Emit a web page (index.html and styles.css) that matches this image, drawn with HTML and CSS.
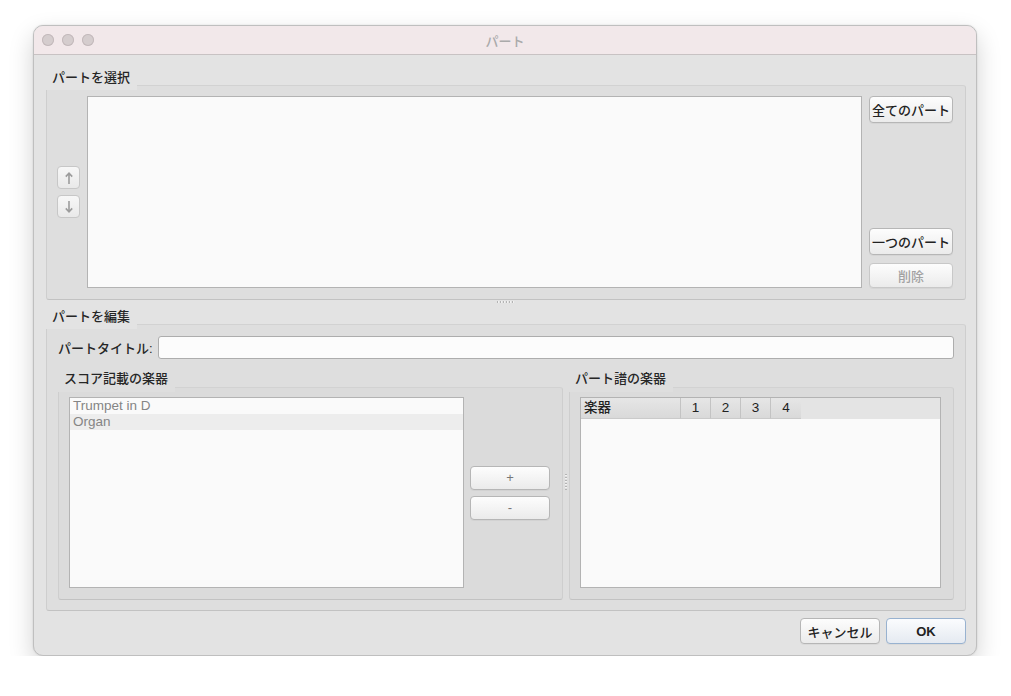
FILE: index.html
```html
<!DOCTYPE html>
<html lang="ja">

<head>
  <meta charset="UTF-8">
  <meta name="viewport" content="width=device-width, initial-scale=1.0">
  <title>パート</title>
  <link rel="stylesheet" href="styles.css">
</head>

<body>
  <div class="window">
    <div class="titlebar">
      <div class="lights"><i></i><i></i><i></i></div>
      <span class="title">パート</span>
    </div>

    <div class="content">
      <div class="group-title">パートを選択</div>
      <div class="frame select">
        <div class="arrows">
          <button class="tool">
            <svg width="10" height="14" viewBox="0 0 10 14"><path d="M5 13V2.5M1.8 5.6L5 2.2l3.2 3.4" stroke="#9c9c9c" stroke-width="1.6" fill="none"/></svg>
          </button>
          <button class="tool">
            <svg width="10" height="14" viewBox="0 0 10 14"><path d="M5 1v10.5M1.8 8.4L5 11.8l3.2-3.4" stroke="#9c9c9c" stroke-width="1.6" fill="none"/></svg>
          </button>
        </div>
        <div class="listbox"></div>
        <div class="side">
          <button class="btn">全てのパート</button>
          <button class="btn push">一つのパート</button>
          <button class="btn small" disabled>削除</button>
        </div>
      </div>

      <div class="splitter-h"><span></span></div>

      <div class="group-title">パートを編集</div>
      <div class="frame edit">
        <div class="title-row">
          <label for="pt">パートタイトル:</label>
          <input id="pt" class="field" type="text">
        </div>
        <div class="panes">
          <div class="pane score">
            <div class="group-title">スコア記載の楽器</div>
            <div class="frame inner">
              <ul class="listbox instruments">
                <li>Trumpet in D</li>
                <li>Organ</li>
              </ul>
              <div class="mid">
                <button class="btn light">+</button>
                <button class="btn light">-</button>
              </div>
            </div>
          </div>
          <div class="splitter-v"><span></span></div>
          <div class="pane parts">
            <div class="group-title">パート譜の楽器</div>
            <div class="frame inner">
              <div class="listbox table">
                <div class="thead">
                  <span class="th name">楽器</span>
                  <span class="th num">1</span>
                  <span class="th num">2</span>
                  <span class="th num">3</span>
                  <span class="th num">4</span>
                </div>
              </div>
            </div>
          </div>
        </div>
      </div>

      <div class="actions">
        <button class="btn wide">キャンセル</button>
        <button class="btn wide default">OK</button>
      </div>
    </div>
  </div>
</body>

</html>
```

FILE: styles.css
```css
body {
  margin: 0;
  background: #fff;
  font-family: "Liberation Sans", "Noto Sans CJK JP", sans-serif;
  font-size: 13px;
  color: #222;
}

.window {
  margin: 25px 0 0 33px;
  width: 944px;
  height: 631px;
  box-sizing: border-box;
  border: 1px solid #bfbfbf;
  border-radius: 10px;
  overflow: hidden;
  background: #e3e3e3;
  box-shadow: 0 10px 24px rgba(0, 0, 0, 0.18), 0 0 2px rgba(0, 0, 0, 0.12);
  display: flex;
  flex-direction: column;
}

.titlebar {
  height: 28px;
  flex: none;
  background: #f2e8ea;
  border-bottom: 1px solid #c8c2c3;
  display: grid;
  grid-template-columns: 1fr auto 1fr;
  align-items: center;
}

.lights {
  display: flex;
  gap: 8px;
  padding-left: 8px;
}

.lights i {
  width: 12px;
  height: 12px;
  border-radius: 50%;
  background: #d5cdce;
  box-shadow: inset 0 0 0 1px #c3b9bb;
}

.title {
  color: #aaa;
  font-weight: 500;
}

.content {
  flex: 1;
  display: flex;
  flex-direction: column;
  padding: 9px 10px 0 12px;
}

/* group box: title tab sits over the frame corner */
.group-title {
  align-self: flex-start;
  height: 26px;
  box-sizing: border-box;
  padding: 6px 7px 0 6px;
  margin-bottom: -5px;
  line-height: 16px;
  background: #e3e3e3;
  font-weight: 500;
  color: #262626;
  position: relative;
  z-index: 1;
}

.frame {
  box-sizing: border-box;
  border: 1px solid;
  border-color: #d2d2d2 #cecece #c2c2c2;
  border-radius: 3px;
  background: #dedede;
}

.listbox {
  box-sizing: border-box;
  background: #fafafa;
  border: 1px solid #b3b3b3;
}

.btn {
  box-sizing: border-box;
  height: 27px;
  padding: 0;
  border: 1px solid #b6b6b6;
  border-radius: 4px;
  background: linear-gradient(#fdfdfd, #ebebeb);
  box-shadow: 0 1px 0 rgba(0, 0, 0, 0.04);
  font: inherit;
  font-weight: 500;
  color: #222;
}

.btn:disabled {
  color: #a2a2a2;
  border-color: #c8c8c8;
}

/* パートを選択 */
.select {
  height: 215px;
  display: flex;
  gap: 7px;
  padding: 10px 12px 11px 10px;
}

.select .listbox {
  flex: 1;
}

.arrows {
  width: 23px;
  display: flex;
  flex-direction: column;
  justify-content: center;
  gap: 6px;
}

.tool {
  width: 23px;
  height: 23px;
  padding: 0;
  border: 1px solid #c7c7c7;
  border-radius: 4px;
  background: linear-gradient(#f7f7f7, #e9e9e9);
  display: flex;
  align-items: center;
  justify-content: center;
}

.side {
  width: 84px;
  display: flex;
  flex-direction: column;
  gap: 8px;
}

.side .push {
  margin-top: auto;
}

.side .small {
  height: 25px;
}

.splitter-h {
  height: 3px;
  display: flex;
  justify-content: center;
  align-items: center;
}

.splitter-h span {
  width: 18px;
  height: 2px;
  background: repeating-linear-gradient(90deg, #b4b4b4 0 1px, #f2f2f2 1px 2px, transparent 2px 3px);
}

/* パートを編集 */
.edit {
  height: 287px;
  display: flex;
  flex-direction: column;
  padding: 11px 11px 10px 11px;
}

.title-row {
  display: flex;
  align-items: center;
  height: 23px;
}

.title-row label {
  width: 100px;
  font-weight: 500;
  color: #262626;
}

.field {
  flex: 1;
  height: 23px;
  box-sizing: border-box;
  border: 1px solid #adadad;
  border-radius: 3px;
  background: #fcfcfc;
  outline: none;
}

.panes {
  flex: 1;
  display: flex;
  margin-top: 5px;
}

.pane {
  display: flex;
  flex-direction: column;
}

.pane.score {
  width: 505px;
}

.pane.parts {
  flex: 1;
}

.pane .group-title {
  height: 28px;
  padding-top: 7px;
  background: #dedede;
}

.inner {
  flex: 1;
  display: flex;
  gap: 6px;
  padding: 9px 12px 11px 10px;
  background: #dbdbdb;
}

.instruments {
  flex: 1;
  margin: 0;
  padding: 0;
  list-style: none;
}

.instruments li {
  height: 16px;
  line-height: 16px;
  padding-left: 3px;
  font-size: 13.5px;
  color: #858585;
}

.instruments li:nth-child(2) {
  background: #ededed;
}

.mid {
  width: 80px;
  display: flex;
  flex-direction: column;
  justify-content: center;
  gap: 6px;
}

.mid .btn {
  height: 24px;
}

.btn.light {
  font-weight: normal;
  color: #777;
}

.splitter-v {
  width: 6px;
  display: flex;
  justify-content: center;
  align-items: center;
}

.splitter-v span {
  width: 2px;
  height: 16px;
  background: repeating-linear-gradient(180deg, #b4b4b4 0 1px, #f2f2f2 1px 2px, transparent 2px 3px);
}

.table {
  flex: 1;
}

.thead {
  display: flex;
  height: 21px;
  background: #e4e4e4;
}

.th {
  box-sizing: border-box;
  height: 21px;
  line-height: 20px;
  border-right: 1px solid #c3c3c3;
  border-bottom: 1px solid #cacaca;
  background: linear-gradient(#e6e6e6, #d9d9d9);
  font-size: 13.5px;
  color: #222;
}

.th.name {
  width: 100px;
  padding-left: 3px;
  font-weight: 500;
}

.th.num {
  width: 30px;
  text-align: center;
}

.th:last-child {
  border-right: none;
}

/* 下のボタン */
.actions {
  display: flex;
  justify-content: flex-end;
  gap: 6px;
  margin-top: 7px;
}

.btn.wide {
  width: 80px;
  height: 26px;
}

.btn.default {
  border-color: #98b2d0;
  background: linear-gradient(#fbfcfe, #e5eaf1);
  font-weight: bold;
}
```
